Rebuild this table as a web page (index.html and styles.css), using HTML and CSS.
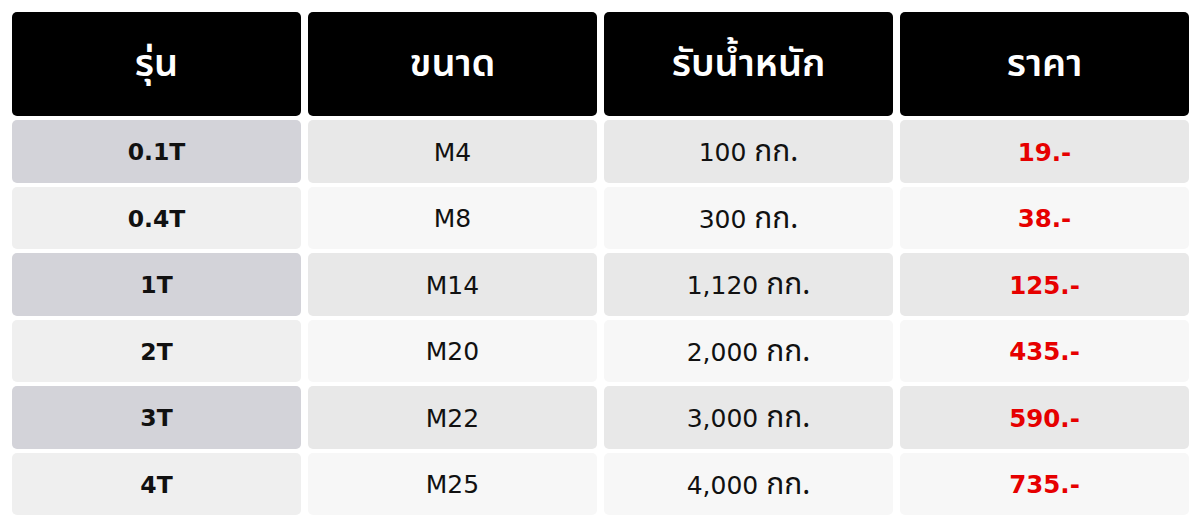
FILE: index.html
```html
<!DOCTYPE html>
<html lang="th">
<head>
<meta charset="utf-8">
<link rel="stylesheet" href="styles.css">
</head>
<body>
<div class="table">
  <div class="cell head">รุ่น</div>
  <div class="cell head">ขนาด</div>
  <div class="cell head">รับน้ำหนัก</div>
  <div class="cell head">ราคา</div>

  <div class="cell model odd">0.1T</div>
  <div class="cell odd">M4</div>
  <div class="cell odd"><span class="val">100 <span class="unit">กก.</span></span></div>
  <div class="cell price odd">19.-</div>

  <div class="cell model even">0.4T</div>
  <div class="cell even">M8</div>
  <div class="cell even"><span class="val">300 <span class="unit">กก.</span></span></div>
  <div class="cell price even">38.-</div>

  <div class="cell model odd">1T</div>
  <div class="cell odd">M14</div>
  <div class="cell odd"><span class="val">1,120 <span class="unit">กก.</span></span></div>
  <div class="cell price odd">125.-</div>

  <div class="cell model even">2T</div>
  <div class="cell even">M20</div>
  <div class="cell even"><span class="val">2,000 <span class="unit">กก.</span></span></div>
  <div class="cell price even">435.-</div>

  <div class="cell model odd">3T</div>
  <div class="cell odd">M22</div>
  <div class="cell odd"><span class="val">3,000 <span class="unit">กก.</span></span></div>
  <div class="cell price odd">590.-</div>

  <div class="cell model even">4T</div>
  <div class="cell even">M25</div>
  <div class="cell even"><span class="val">4,000 <span class="unit">กก.</span></span></div>
  <div class="cell price even">735.-</div>
</div>
</body>
</html>
```
FILE: styles.css
```css
html, body {
  margin: 0;
  padding: 0;
  background: #ffffff;
}
body {
  padding: 12px 12px 0 12px;
  font-family: "DejaVu Sans", "Noto Sans Thai", "Noto Sans", sans-serif;
  color: #111111;
}
.table {
  display: grid;
  grid-template-columns: 289px 289px 289px 289px;
  grid-template-rows: 104px repeat(6, 62.5px);
  column-gap: 7px;
  row-gap: 4px;
}
.cell {
  display: flex;
  align-items: center;
  justify-content: center;
  border-radius: 5px;
  font-size: 25px;
  padding-top: 2px;
}
.val {
  white-space: nowrap;
}
.unit {
  font-family: "Noto Sans Thai", "Noto Sans", sans-serif;
  font-size: 30px;
  line-height: 1;
}
.head {
  background: #000000;
  color: #ffffff;
  font-family: "Noto Sans Thai", "Noto Sans", sans-serif;
  font-size: 38px;
  font-weight: 600;
  padding-top: 0;
}
.odd { background: #e8e8e8; }
.even { background: #f7f7f7; }
.model { font-weight: 700; font-size: 23.5px; }
.model.odd { background: #d3d3d9; }
.model.even { background: #efefef; }
.price { color: #e60000; font-weight: 700; font-size: 24.5px; }
```
